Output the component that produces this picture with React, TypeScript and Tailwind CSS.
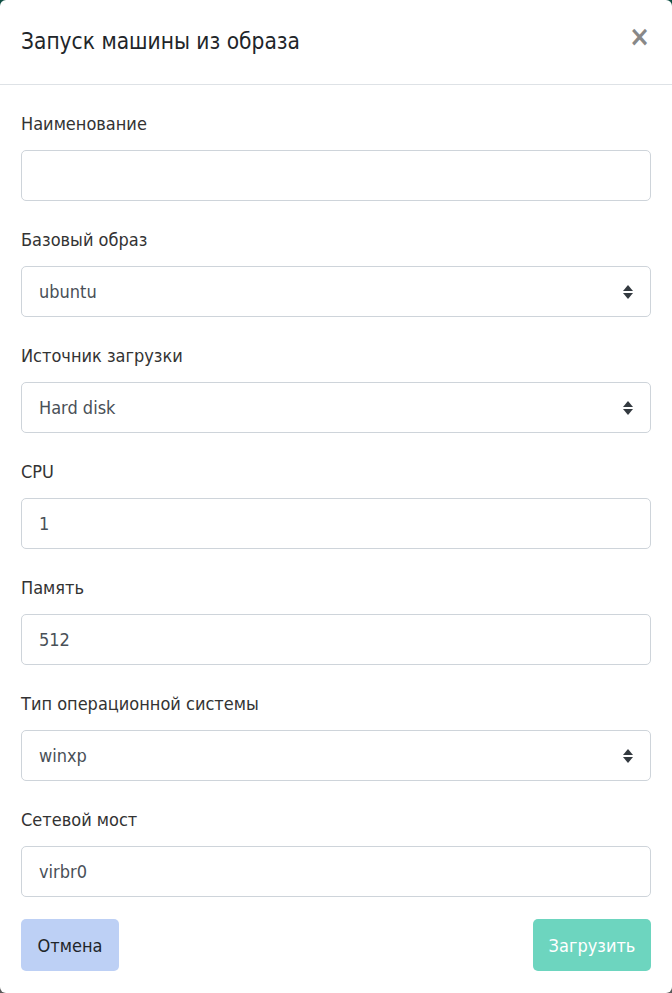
import { type ReactNode } from "react";

const FONT = { fontFamily: '"DejaVu Sans Condensed", "Liberation Sans Narrow", "Roboto", sans-serif' };

function Field({ label, children, last }: { label: string; children: ReactNode; last?: boolean }) {
  return (
    <div className={last ? "" : "mb-[25px]"}>
      <div className="h-[27px] leading-[27px] text-[18px] text-[#333]">{label}</div>
      <div className="mt-[13px]">{children}</div>
    </div>
  );
}

function TextBox({ value }: { value?: string }) {
  return (
    <div className="h-[51px] rounded-[5px] border border-[#ced4da] bg-white px-[17px] flex items-center text-[18px] text-[#495057]">
      {value}
    </div>
  );
}

function SelectBox({ value }: { value: string }) {
  return (
    <div className="h-[51px] rounded-[5px] border border-[#ced4da] bg-white pl-[17px] pr-[16px] flex items-center justify-between text-[18px] text-[#495057]">
      <span>{value}</span>
      <svg width="12" height="16" viewBox="0 0 12 16" className="text-[#343a40]">
        <path d="M6 1 L11 7 H1 Z" fill="currentColor" />
        <path d="M6 15 L11 9 H1 Z" fill="currentColor" />
      </svg>
    </div>
  );
}

export default function App() {
  return (
    <div className="min-h-[993px] w-[672px] bg-gradient-to-b from-[#0f4f44] to-[#5a5a5a]" style={FONT}>
      <div className="h-[993px] rounded-[6px] bg-white flex flex-col">
        {/* Header */}
        <div className="h-[85px] border-b border-[#dee2e6] px-[21px] flex items-center justify-between">
          <h1 className="text-[22.5px] text-[#212529]">Запуск машины из образа</h1>
          <span className="mr-[1px] -mt-[10px] text-[28px] font-bold leading-none text-[#888]">×</span>
        </div>

        {/* Body */}
        <div className="px-[21px] pt-[25px]">
          <Field label="Наименование">
            <TextBox />
          </Field>
          <Field label="Базовый образ">
            <SelectBox value="ubuntu" />
          </Field>
          <Field label="Источник загрузки">
            <SelectBox value="Hard disk" />
          </Field>
          <Field label="CPU">
            <TextBox value="1" />
          </Field>
          <Field label="Память">
            <TextBox value="512" />
          </Field>
          <Field label="Тип операционной системы">
            <SelectBox value="winxp" />
          </Field>
          <Field label="Сетевой мост" last>
            <TextBox value="virbr0" />
          </Field>
        </div>

        {/* Footer */}
        <div className="px-[21px] mt-[22px] flex justify-between">
          <button className="h-[52px] w-[98px] rounded-[5px] bg-[#bdd0f5] text-[18px] text-[#212529]">Отмена</button>
          <button className="h-[52px] w-[118px] rounded-[5px] bg-[#6dd5bf] text-[18px] text-white">Загрузить</button>
        </div>
      </div>
    </div>
  );
}
